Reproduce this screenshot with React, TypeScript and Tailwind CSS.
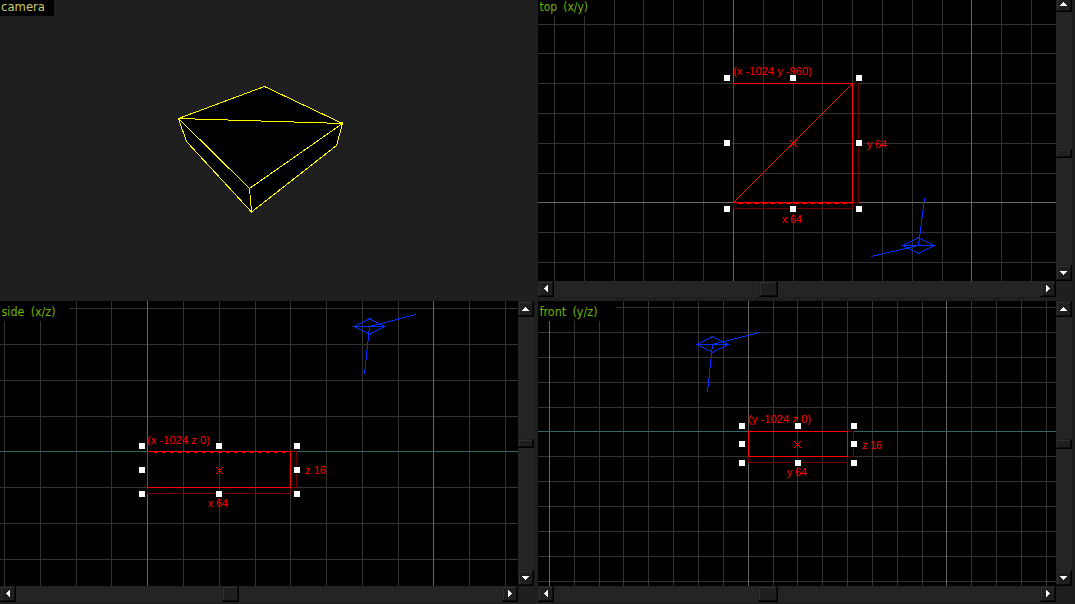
import type { ReactNode } from "react";

const NS = "crispEdges";

type Line = [number, number, number, number];

function Arrow({ dir }: { dir: "up" | "down" | "left" | "right" }) {
  const rects: Record<string, Line[]> = {
    up: [[7, 6, 1, 1], [6, 7, 3, 1], [5, 8, 5, 1], [4, 9, 7, 1]],
    down: [[4, 6, 7, 1], [5, 7, 5, 1], [6, 8, 3, 1], [7, 9, 1, 1]],
    left: [[9, 4, 1, 7], [8, 5, 1, 5], [7, 6, 1, 3], [6, 7, 1, 1]],
    right: [[6, 4, 1, 7], [7, 5, 1, 5], [8, 6, 1, 3], [9, 7, 1, 1]],
  };
  return (
    <svg width={16} height={16} shapeRendering={NS} className="block shrink-0">
      <rect width={16} height={16} fill="#000" />
      <rect width={15} height={15} fill="#1f1f1f" />
      <path d="M1.5 14V1.5H14" stroke="#303030" fill="none" />
      <path d="M14.5 1V14.5H1" stroke="#0c0c0c" fill="none" />
      {rects[dir].map(([x, y, w, h]) => (
        <rect key={`${x}-${y}`} x={x} y={y} width={w} height={h} fill="#fff" />
      ))}
    </svg>
  );
}

function Thumb({ w, h }: { w: number; h: number }) {
  return (
    <svg width={w} height={h} shapeRendering={NS} className="block shrink-0">
      <rect width={w} height={h} fill="#000" />
      <rect width={w - 1} height={h - 1} fill="#1f1f1f" />
      <path d={`M1.5 ${h - 2}V1.5H${w - 2}`} stroke="#303030" fill="none" />
      <path d={`M${w - 1.5} 1V${h - 1.5}H1`} stroke="#0c0c0c" fill="none" />
    </svg>
  );
}

const TRACK = "bg-[conic-gradient(#2c2c2c_25%,#1c1c1c_0_50%,#2c2c2c_0_75%,#1c1c1c_0)] bg-[length:2px_2px]";

function HBar({ before, size }: { before: string; size: number }) {
  return (
    <div className={`flex h-4 w-[518px] ${TRACK}`}>
      <Arrow dir="left" />
      <div className={`shrink-0 ${before}`} />
      <Thumb w={size} h={16} />
      <div className="flex-1" />
      <Arrow dir="right" />
    </div>
  );
}

function VBar({ before, size, clip = false }: { before: string; size: number; clip?: boolean }) {
  return (
    <div className={`flex h-full w-4 flex-col overflow-hidden ${TRACK}`}>
      <div className={clip ? "-mt-1" : ""}>
        <Arrow dir="up" />
      </div>
      <div className={`shrink-0 ${before}`} />
      <Thumb w={16} h={size} />
      <div className="flex-1" />
      <Arrow dir="down" />
    </div>
  );
}

type GridProps = {
  x: number;
  y: number;
  h: number;
  xs: number[];
  ys: number[];
  brightX: number[];
  axis: number;
  axisColor: string;
  label: string;
  labelWidth: number;
  boxWidth: number;
  boxHeight: number;
  baseline: number;
  children: ReactNode;
};

function Plane(p: GridProps) {
  return (
    <svg width={518} height={p.h} viewBox={`${p.x} ${p.y} 518 ${p.h}`} shapeRendering={NS} className="block bg-black">
      {p.xs.map((v) => <rect key={v} x={v} y={p.y} width={1} height={p.h} fill="#333" />)}
      {p.ys.map((v) => <rect key={v} x={p.x} y={v} width={518} height={1} fill="#333" />)}
      {p.brightX.map((v) => <rect key={v} x={v} y={p.y} width={1} height={p.h} fill="#666" />)}
      <rect x={p.x} y={p.axis} width={518} height={1} fill={p.axisColor} />
      <rect x={p.x} y={p.y} width={p.boxWidth} height={p.boxHeight} fill="#000" />
      <text
        x={p.x + 1.5}
        y={p.baseline}
        textLength={p.labelWidth}
        lengthAdjust="spacingAndGlyphs"
        fill="#70b400"
        className="font-['DejaVu_Sans',sans-serif] text-[12px] [word-spacing:3px]"
      >
        {p.label}
      </text>
      {p.children}
    </svg>
  );
}

function Note({ x, y, w, children }: { x: number; y: number; w: number; children: string }) {
  return (
    <text
      x={x}
      y={y}
      textLength={w}
      lengthAdjust="spacingAndGlyphs"
      fill="#ff0000"
      className="font-['Liberation_Sans',sans-serif] text-[11px]"
    >
      {children}
    </text>
  );
}

function Handles({ xs, ys }: { xs: number[]; ys: number[] }) {
  return (
    <>
      {ys.flatMap((y, j) =>
        xs.map((x, i) =>
          i === 1 && j === 1 ? null : (
            <g key={`${x}-${y}`}>
              <rect x={x - 1} y={y - 1} width={8} height={8} fill="#000" />
              <rect x={x} y={y} width={6} height={6} fill="#fff" />
            </g>
          ),
        ),
      )}
    </>
  );
}

function Cross({ x, y }: { x: number; y: number }) {
  return <path d={`M${x - 3} ${y - 3}l7 7M${x + 4} ${y - 3}l-7 7`} stroke="#f00" fill="none" />;
}

function Top() {
  return (
    <Plane
      x={538} y={0} h={281}
      xs={[554, 584, 614, 643, 673, 703, 763, 793, 822, 852, 882, 912, 942, 1001, 1031]}
      ys={[24, 53, 83, 113, 143, 173, 232, 262]}
      brightX={[733, 971]} axis={202} axisColor="#666"
      label="top (x/y)" labelWidth={48.5} boxWidth={70} boxHeight={16} baseline={11}
    >
      <path d="M853 83.5H858.5V202.5H853M733.5 203V208.5H852.5V203" stroke="#700000" fill="none" />
      <path d="M733.5 202.5L852.5 83.5" stroke="#f00" fill="none" />
      <rect x={733.5} y={83.5} width={119} height={119} stroke="#f00" fill="none" />
      <path d="M738 203.5H852" stroke="#f00" strokeDasharray="5 3" />
      <Cross x={793} y={143} />
      <Note x={733} y={75} w={79}>(x -1024 y -960)</Note>
      <Note x={867} y={148} w={20}>y 64</Note>
      <Note x={782} y={223} w={20}>x 64</Note>
      <Handles xs={[724, 790, 856]} ys={[75, 140, 206]} />
      <path d="M903.5 245.5L918.5 237.5L933.5 245.5L918.5 253.5ZM902 245.5H934M918.5 245.5L924.5 198M918.5 245.5L871 256.5" stroke="#0030ff" fill="none" />
    </Plane>
  );
}

function Side() {
  return (
    <Plane
      x={0} y={301} h={285}
      xs={[4, 40, 76, 111, 183, 219, 255, 290, 326, 362, 398, 469, 505]}
      ys={[308, 344, 380, 416, 487, 523, 559]}
      brightX={[147, 433]} axis={451} axisColor="#336666"
      label="side (x/z)" labelWidth={54} boxWidth={70} boxHeight={20} baseline={316}
    >
      <path d="M291 451.5H296.5V487.5H291M147.5 488V493.5H290.5V488" stroke="#700000" fill="none" />
      <rect x={147.5} y={451.5} width={143} height={36} stroke="#f00" fill="none" />
      <path d="M154 452.5H290" stroke="#f00" strokeDasharray="4 4" />
      <Cross x={219} y={470} />
      <Note x={147} y={444} w={63}>(x -1024 z 0)</Note>
      <Note x={305} y={474} w={21}>z 16</Note>
      <Note x={208} y={507} w={20}>x 64</Note>
      <Handles xs={[139, 216, 294]} ys={[443, 467, 491]} />
      <path d="M354.5 326.5L369.5 318.5L384.5 326.5L369.5 334.5ZM353 326.5H385M369.5 326.5L364.5 374M369.5 326.5L416 314.5" stroke="#0030ff" fill="none" />
    </Plane>
  );
}

function Front() {
  return (
    <Plane
      x={538} y={301} h={285}
      xs={[574, 599, 623, 648, 673, 698, 723, 773, 797, 822, 847, 872, 897, 922, 971, 996, 1021, 1046]}
      ys={[307, 332, 357, 382, 407, 456, 481, 506, 531, 556, 581]}
      brightX={[549, 748, 946]} axis={431} axisColor="#336666"
      label="front (y/z)" labelWidth={58} boxWidth={78} boxHeight={20} baseline={316}
    >
      <path d="M848 431.5H853.5V456.5H848M748.5 457V462.5H847.5V457" stroke="#700000" fill="none" />
      <rect x={748.5} y={431.5} width={99} height={25} stroke="#f00" fill="none" />
      <Cross x={797} y={444} />
      <Note x={748} y={423} w={63}>(y -1024 z 0)</Note>
      <Note x={862} y={449} w={20}>z 16</Note>
      <Note x={787} y={476} w={20}>y 64</Note>
      <Handles xs={[739, 795, 851]} ys={[423, 441, 460]} />
      <path d="M697.5 344.5L712.5 336.5L727.5 344.5L712.5 352.5ZM697 344.5H729M712.5 344.5L707.5 392M712.5 344.5L760 332.5" stroke="#0030ff" fill="none" />
    </Plane>
  );
}

function Camera() {
  return (
    <svg width={534} height={297} shapeRendering={NS} className="block">
      <rect width={54} height={16} fill="#000" />
      <text x={1} y={11} textLength={44} lengthAdjust="spacingAndGlyphs" fill="#cccc66" className="font-['DejaVu_Sans',sans-serif] text-[12px]">
        camera
      </text>
      <path d="M178.5 118.5L264.5 86.5L342.5 123.5L336.5 145.5L251.5 212L186.5 141.5Z" fill="#000" stroke="#ff0" />
      <path d="M178.5 118.5L342.5 123.5L249.5 188.5ZM249.5 188.5L251.5 212" fill="none" stroke="#ff0" />
      <rect x={341} y={122} width={2} height={3} fill="#ff0" />
    </svg>
  );
}

export default function App() {
  return (
    <main className="grid h-[604px] w-[1075px] grid-cols-[538px_536px] grid-rows-[301px_303px] overflow-hidden bg-[#1f1f1f]">
      <Camera />
      <section className="grid grid-cols-[518px_16px] grid-rows-[281px_16px] border-r border-[#171717]">
        <Top />
        <VBar clip before="h-[137px]" size={9} />
        <HBar before="w-[205px]" size={19} />
      </section>
      <section className="grid grid-cols-[518px_16px] grid-rows-[285px_16px]">
        <Side />
        <VBar before="h-[122px]" size={9} />
        <HBar before="w-[206px]" size={17} />
      </section>
      <section className="grid grid-cols-[518px_16px] grid-rows-[285px_16px] border-r border-[#171717]">
        <Front />
        <VBar before="h-[122px]" size={10} />
        <HBar before="w-[204px]" size={20} />
      </section>
    </main>
  );
}
